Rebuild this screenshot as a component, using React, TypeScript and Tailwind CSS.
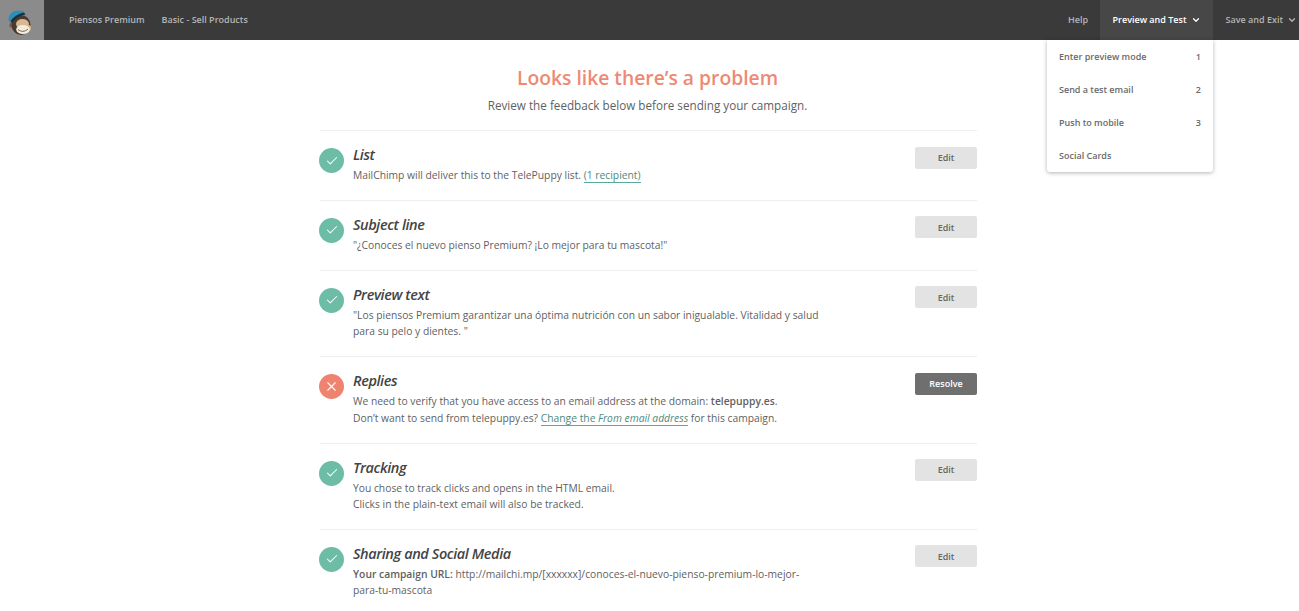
import { Check, ChevronDown, X } from "lucide-react";
import type { ReactNode } from "react";

const menuItems = [
  { label: "Enter preview mode", key: "1" },
  { label: "Send a test email", key: "2" },
  { label: "Push to mobile", key: "3" },
  { label: "Social Cards", key: "" },
];

function Logo() {
  return (
    <svg viewBox="0 0 44 40" className="h-10 w-11">
      <circle cx="12" cy="25" r="2.6" fill="#7a5a44" />
      <ellipse cx="21" cy="25" rx="9.5" ry="10" fill="#4b3a31" />
      <ellipse cx="28.5" cy="28" rx="2.6" ry="3" fill="#d8b48e" />
      <ellipse cx="22.5" cy="24" rx="6.5" ry="5" fill="#d9b791" />
      <ellipse cx="23" cy="29.5" rx="6.8" ry="4.6" fill="#f4ecdc" />
      <path d="M18 29.5 C20.5 32 25 32 28 29" stroke="#6b5142" strokeWidth="0.9" fill="none" />
      <path d="M8.5 20 C8 14 14 8.5 23 11 C24 11.3 24 12.5 23 12.8 C18 14 13 17 10.5 21.5 C9.6 22 8.7 21.3 8.5 20 Z" fill="#2b8fb8" />
      <path d="M10.5 21.5 C13 17 18 14 24 12.6 L25.5 14.5 C20 15.5 15 18.5 12 23 Z" fill="#16323f" />
    </svg>
  );
}

function Row({
  title,
  status = "ok",
  action = "Edit",
  children,
}: {
  title: string;
  status?: "ok" | "error";
  action?: string;
  children: ReactNode;
}) {
  return (
    <div className="flex border-t border-[#eeeeee] pt-[14px] pb-[16.7px]">
      <div
        className={`mt-[3px] -ml-px flex h-[25px] w-[25px] shrink-0 items-center justify-center rounded-full text-white ${
          status === "ok" ? "bg-[#6dbda6]" : "bg-[#ee8370]"
        }`}
      >
        {status === "ok" ? (
          <Check size={14} strokeWidth={1.75} />
        ) : (
          <X size={15} strokeWidth={1.75} />
        )}
      </div>
      <div className="ml-[9px] flex-1">
        <h3 className="text-[14.5px] leading-5 font-semibold tracking-[-0.4px] text-[#444444] italic">{title}</h3>
        <div className="mt-[2px] w-[470px] text-[10.3px] leading-[16.3px] text-[#5f5f5f]">{children}</div>
      </div>
      <button
        className={`mt-[1.5px] h-[22px] w-[62px] shrink-0 rounded-[2px] text-[9px] font-semibold ${
          action === "Resolve" ? "bg-[#6f6f6f] text-white" : "bg-[#e3e3e3] text-[#666666]"
        }`}
      >
        {action}
      </button>
    </div>
  );
}

export default function App() {
  return (
    <div className="relative h-screen overflow-hidden bg-white font-['Open_Sans',sans-serif]">
      <header className="flex h-10 items-stretch bg-[#3a3a3a] text-[9px] font-semibold text-[#b5b5b5]">
        <div className="w-11 bg-[#8b8b8b]">
          <Logo />
        </div>
        <div className="ml-[25px] flex items-center gap-[17px]">
          <span>Piensos Premium</span>
          <span>Basic - Sell Products</span>
        </div>
        <div className="ml-auto flex items-stretch">
          <span className="mr-3 flex items-center">Help</span>
          <div className="flex w-[113px] items-center justify-center gap-[5px] bg-[#474747] pl-px text-white">
            Preview and Test
            <ChevronDown size={10} strokeWidth={3} />
          </div>
          <div className="flex w-[86px] items-center justify-end gap-1 pr-[2px]">
            Save and Exit
            <ChevronDown size={10} strokeWidth={3} />
          </div>
        </div>
      </header>

      <div className="absolute top-10 left-[1047px] z-10 h-[132px] w-[166px] rounded-b-[3px] bg-white shadow-[0_1px_4px_rgba(0,0,0,0.3)]">
        {menuItems.map((item) => (
          <div
            key={item.label}
            className="flex h-[33px] items-center justify-between px-3 text-[9px] font-semibold text-[#6a6a6a]"
          >
            <span>{item.label}</span>
            <span>{item.key}</span>
          </div>
        ))}
      </div>

      <main className="mx-auto w-[657px] translate-x-[-1px]">
        <h1 className="mt-[22px] pr-[2px] text-center text-[19.3px] leading-[32px] font-semibold text-[#ee8a73]">
          Looks like there’s a problem
        </h1>
        <p className="mt-[3px] pr-[2px] text-center text-[11.7px] leading-[17px] text-[#5f5f5f]">
          Review the feedback below before sending your campaign.
        </p>
        <div className="mt-[16px]">
          <Row title="List">
            MailChimp will deliver this to the TelePuppy list.{" "}
            <a className="border-b border-[#5aa897] text-[#4d8a80]">(1 recipient)</a>
          </Row>
          <Row title="Subject line">"¿Conoces el nuevo pienso Premium? ¡Lo mejor para tu mascota!"</Row>
          <Row title="Preview text">
            "Los piensos Premium garantizar una óptima nutrición con un sabor inigualable. Vitalidad y salud para su
            pelo y dientes. "
          </Row>
          <Row title="Replies" status="error" action="Resolve">
            We need to verify that you have access to an email address at the domain:{" "}
            <strong className="font-semibold">telepuppy.es</strong>.
            <br />
            Don’t want to send from telepuppy.es?{" "}
            <a className="border-b border-[#5aa897] text-[#4d8a80]">
              Change the <em>From email address</em>
            </a>{" "}
            for this campaign.
          </Row>
          <Row title="Tracking">
            You chose to track clicks and opens in the HTML email.
            <br />
            Clicks in the plain-text email will also be tracked.
          </Row>
          <Row title="Sharing and Social Media">
            <strong className="font-semibold">Your campaign URL:</strong>{" "}
            http://mailchi.mp/[xxxxxx]/conoces-el-nuevo-pienso-premium-lo-mejor-para-tu-mascota
          </Row>
        </div>
      </main>
    </div>
  );
}
